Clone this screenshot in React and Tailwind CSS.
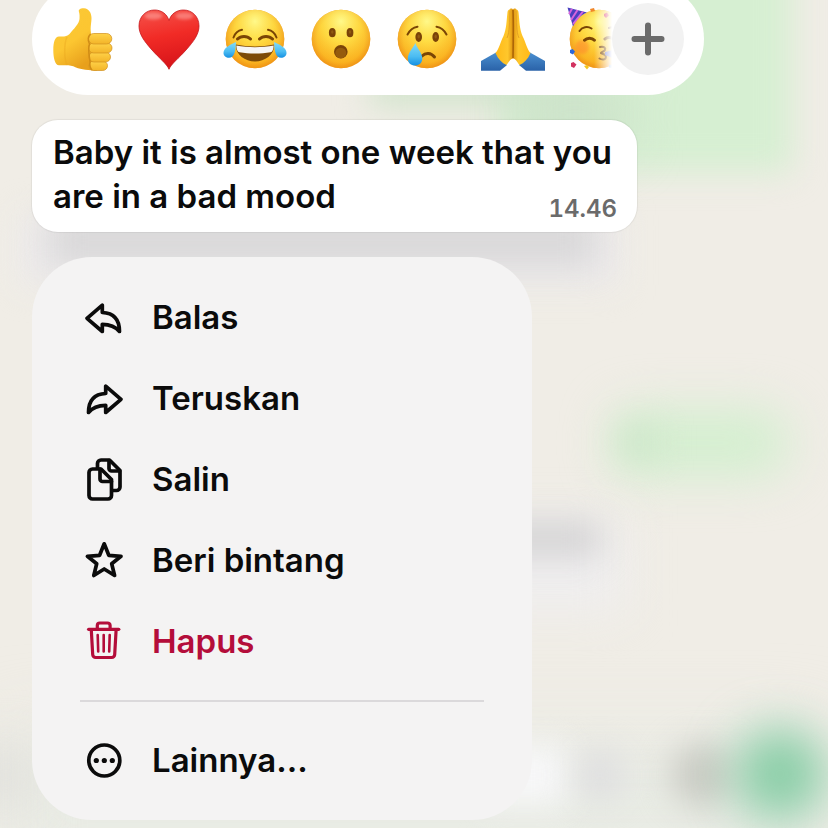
const Face = () => (
  <>
    <circle cx="32" cy="32" r="29.3" fill="url(#faceEdge)" />
    <circle cx="32" cy="32" r="29.3" fill="url(#faceGlow)" />
  </>
);

const ThumbsUp = () => (
  <>
    <path
      d="M28 5C27 2 30 1 33 1.200C38 1.500 40.500 6 40.500 11C40.500 16 39 20 40 26L46 63.500C38 63.500 30 62.500 25 60.500C19 57.500 16 58.500 8 58.300C4 58 2.300 51 2.300 43C2.300 35 4 29.500 8 29.500C12 29.500 16 30 18.500 27C23 21.500 28 17 28.500 12C28.700 9 28.600 7 28 5Z"
      fill="url(#hand)"
    />
    <path d="M16 30C13 36 13 52 16 58" stroke="#e9a51d" strokeWidth="1.500" fill="none" opacity="0.4" />
    <g fill="url(#finger)" stroke="#d08f1c" strokeWidth="0.700">
      <rect x="38" y="54" width="18.500" height="9.500" rx="4.700" />
      <rect x="38" y="45" width="21.500" height="10" rx="5" />
      <rect x="37.500" y="36" width="23.500" height="10" rx="5" />
      <rect x="37.500" y="26.500" width="23.300" height="10.500" rx="5.200" />
    </g>
    <path d="M39.500 27C36.500 30 37 34 38.500 37C36.500 42 38.500 49 39 55C38.500 58 39 61 41 63" stroke="#d08c16" strokeWidth="1.500" fill="none" />
  </>
);

const Heart = () => (
  <>
    <path
      d="M32 62.300C30 57 22 51 15 43C7 34 2 27 2 19C2 9.500 9 3 17.500 3C24.500 3 30 7 32 13.500C34 7 39.500 3 46.500 3C55 3 62 9.500 62 19C62 27 57 34 49 43C42 51 34 57 32 62.300Z"
      fill="url(#heart)"
      stroke="#c4151a"
      strokeWidth="0.800"
    />
    <ellipse cx="16.500" cy="9" rx="9" ry="3.500" fill="#ffb3ae" opacity="0.5" filter="url(#soft)" />
    <ellipse cx="47.500" cy="9" rx="9" ry="3.500" fill="#ffb3ae" opacity="0.5" filter="url(#soft)" />
  </>
);

const Joy = () => (
  <>
    <Face />
    <g stroke="#7a4505" fill="none" strokeLinecap="round">
      <path d="M10.500 30.500C12 26.500 15 23.500 19 22.800M53.500 30.500C52 26.500 49 23.500 45 22.800" strokeWidth="2" />
      <path d="M14.500 32C18 28.500 24 28.500 27.500 32M36.500 32C40 28.500 46 28.500 49.500 32" strokeWidth="3" />
    </g>
    <path d="M12.700 37.500C25 40 39 40 51.300 37.500C51.500 48 42 54.500 32 54.500C22 54.500 12.500 48 12.700 37.500Z" fill="#7c4a08" />
    <path d="M13.300 38.500C25 40.800 39 40.800 50.700 38.500C50.500 42.500 49.500 45 47.500 45.300C38 47 26 47 16.500 45.300C14.500 45 13.500 42.500 13.300 38.500Z" fill="#f6f5f4" />
    <path d="M13 35C4 39 0.500 42 0.500 46C0.500 49 3 50.800 6 50.800C11 50.800 12.500 45 13 35Z" fill="url(#tear)" />
    <path d="M51 35C60 39 63.500 42 63.500 46C63.500 49 61 50.800 58 50.800C53 50.800 51.500 45 51 35Z" fill="url(#tear)" />
  </>
);

const Wow = () => (
  <>
    <Face />
    <g fill="#7a4308">
      <ellipse cx="23.300" cy="25.700" rx="3.400" ry="4.600" />
      <ellipse cx="41" cy="25.700" rx="3.400" ry="4.600" />
      <ellipse cx="31.800" cy="44.700" rx="6.800" ry="6.800" />
    </g>
    <ellipse cx="31.800" cy="46" rx="5.500" ry="5.200" fill="#955b0d" />
    <ellipse cx="23.300" cy="25" rx="1.200" ry="1.800" fill="#905a12" />
    <ellipse cx="41" cy="25" rx="1.200" ry="1.800" fill="#905a12" />
  </>
);

const Sad = () => (
  <>
    <Face />
    <g stroke="#7a4505" fill="none" strokeLinecap="round" strokeWidth="2">
      <path d="M12.500 27.500C14.500 23.500 18 20.500 22.500 19.700M41.500 19.700C46 20.500 49.500 23.500 51.500 27.500" />
      <path d="M27 49C30.500 45.500 36 45.500 39.500 50" strokeWidth="3" />
    </g>
    <g fill="#7a4308">
      <ellipse cx="23.700" cy="30" rx="3.300" ry="5" />
      <ellipse cx="40.700" cy="30" rx="3.300" ry="5" />
    </g>
    <ellipse cx="23.700" cy="29.500" rx="1.200" ry="2" fill="#905a12" />
    <ellipse cx="40.700" cy="29.500" rx="1.200" ry="2" fill="#905a12" />
    <path d="M20.300 36C18 41 12.800 46 12.800 51.500C12.800 56 16 58.500 20 58.500C24 58.500 27.300 56 27.300 51.500C27.300 46 22 41 20.300 36Z" fill="url(#tear)" />
  </>
);

const Pray = () => (
  <>
    <path d="M0 54L15 45.500L26 58L19 63.700H0Z" fill="url(#sleeve)" />
    <path d="M64 54L49 45.500L38 58L45 63.700H64Z" fill="url(#sleeve)" />
    <path
      d="M32 2.500C31.500 1 29 1 28.500 2.500C27 3 26.500 4 26.400 6C25.500 14 25.500 22 22.500 29C19 36 18 42 14.500 46C17 52 21 56 25.500 58C28 55 29 52 32 51.500C35 52 36 55 38.500 58C43 56 47 52 49.500 46C46 42 45 36 41.500 29C38.500 22 38.500 14 37.600 6C37.500 4 37 3 35.500 2.500C35 1 32.500 1 32 2.500Z"
      fill="url(#palms)"
    />
    <path d="M32 3C32.500 15 32.300 35 32 51" stroke="#ac6608" strokeWidth="1.600" fill="none" />
    <path d="M29 4C28.300 15 29 24 26 31M35 4C35.700 15 35 24 38 31" stroke="#e5a223" strokeWidth="1" fill="none" />
  </>
);

const Party = () => (
  <>
    <Face />
    <circle cx="15" cy="40" r="7" fill="#ff7a2f" opacity="0.45" filter="url(#soft)" />
    <path d="M0.500 0.500L20 5.500C14 8 8.500 13 6 19.500Z" fill="#4a3fc0" />
    <path d="M5 1.700L2 7M10.500 3L4 13M16 4.500L6 17" stroke="#d565dc" strokeWidth="2" />
    <g stroke="#7a4505" fill="none" strokeLinecap="round">
      <path d="M12.500 24C15 20 20.500 19 24.500 21.500M42 21C44 20 46 20 48 21" strokeWidth="2" />
      <path d="M17.500 33.200C20 30.500 25 30.500 27.500 33.200M38 32C40 30 44 30 46 32" strokeWidth="3" />
      <path d="M33 40C37 39 39 41 38 43C37 45 34 45 34 46C35 47 39 47 39 50C39 53 35 53 32.500 51.500" strokeWidth="2" />
    </g>
    <path d="M38 45L46 43V51L38 48Z" fill="#6470d0" />
    <path d="M23 2L27 1L28 4L24 5Z" fill="#f0872a" />
    <path d="M37 7L40 5.500L42 8.500L39 11L37 9Z" fill="#dc3b65" />
    <path d="M3 43L5.500 42L8 44.500L6 47.500L3 46Z" fill="#2d67d8" />
    <path d="M4 56L6.500 55L9.500 57.500L7 61L4 59.500Z" fill="#d23260" />
    <path d="M17 59L20 58L22 60L20 62.500Z" fill="#f3c51f" />
    <path d="M42 58L46 57.500L45 61L42 60.500Z" fill="#5a93e0" />
  </>
);

const reactions = [
  { label: "Jempol", Drawing: ThumbsUp },
  { label: "Hati", Drawing: Heart },
  { label: "Tertawa", Drawing: Joy },
  { label: "Kaget", Drawing: Wow },
  { label: "Sedih", Drawing: Sad },
  { label: "Terima kasih", Drawing: Pray },
  { label: "Pesta", Drawing: Party },
];

const ReplyIcon = () => (
  <path d="M3 21.300L18.300 8.200V15.500C29.500 16 35.500 22.500 35.500 34.500C31.500 29.500 27 27.300 18.300 27.300V34.500Z" />
);

const ForwardIcon = () => (
  <path d="M37 21.300L21.700 8.200V15.500C10.500 16 4.500 22.500 4.500 34.500C8.500 29.500 13 27.300 21.700 27.300V34.500Z" />
);

const CopyIcon = () => (
  <>
    <path d="M8.500 10H17L27.500 20.500V36.500A3.500 3.500 0 0 1 24 40H8.500A3.500 3.500 0 0 1 5 36.500V13.500A3.500 3.500 0 0 1 8.500 10Z" />
    <path d="M16 10V20A2.500 2.500 0 0 0 18.500 22.500H27.500" />
    <path d="M13.500 9V4.500A3.500 3.500 0 0 1 17 1H25.500L36 11.500V28A3.500 3.500 0 0 1 32.500 31.500H28.500" />
    <path d="M25 1.500V9.500A2.500 2.500 0 0 0 27.500 12H35.500" />
  </>
);

const StarIcon = () => (
  <path d="M20.200 3.800L24.800 15.300L37 16.300L27.700 23.800L30.600 35.500L20.200 29L9.800 35.500L12.700 23.800L3.400 16.300L15.600 15.300Z" />
);

const TrashIcon = () => (
  <>
    <path d="M4.600 8.300H34.800" strokeWidth="3.200" />
    <path d="M13.300 8V4.500A2.500 2.500 0 0 1 15.800 2H23.600A2.500 2.500 0 0 1 26.100 4.500V8" strokeWidth="3.200" />
    <path d="M7.300 9L8.700 33.500A3 3 0 0 0 11.700 36.500H27.700A3 3 0 0 0 30.700 33.500L32.100 9" strokeWidth="3.200" />
    <path d="M13.700 14L14.200 30.500M19.700 14V30.500M25.700 14L25.200 30.500" strokeWidth="2.600" />
  </>
);

const MoreIcon = () => (
  <>
    <circle cx="20.300" cy="20.500" r="15.500" />
    <g fill="currentColor" stroke="none">
      <circle cx="12.300" cy="20.500" r="2.600" />
      <circle cx="20.300" cy="20.500" r="2.600" />
      <circle cx="28.300" cy="20.500" r="2.600" />
    </g>
  </>
);

const actions = [
  { label: "Balas", Icon: ReplyIcon },
  { label: "Teruskan", Icon: ForwardIcon },
  { label: "Salin", Icon: CopyIcon },
  { label: "Beri bintang", Icon: StarIcon },
  { label: "Hapus", Icon: TrashIcon, danger: true },
];

// Shared gradients for the emoji drawings
const EmojiDefs = () => (
  <svg className="absolute h-0 w-0" aria-hidden="true">
    <defs>
      <radialGradient id="faceEdge" cx="0.5" cy="0.5" r="0.5">
        <stop offset="0" stopColor="#ffd93b" />
        <stop offset="0.8" stopColor="#fcbe24" />
        <stop offset="1" stopColor="#ea8f17" />
      </radialGradient>
      <radialGradient id="faceGlow" cx="0.5" cy="0.2" r="0.75">
        <stop offset="0" stopColor="#fff98a" />
        <stop offset="0.45" stopColor="#ffe049" stopOpacity="0.7" />
        <stop offset="1" stopColor="#f79d16" stopOpacity="0.45" />
      </radialGradient>
      <linearGradient id="hand" x1="0" y1="0" x2="0.5" y2="1">
        <stop offset="0" stopColor="#fbc936" />
        <stop offset="0.6" stopColor="#fcc631" />
        <stop offset="1" stopColor="#e8a01c" />
      </linearGradient>
      <linearGradient id="finger" x1="0" y1="0" x2="0" y2="1">
        <stop offset="0" stopColor="#ffd349" />
        <stop offset="1" stopColor="#f3b429" />
      </linearGradient>
      <linearGradient id="palms">
        <stop offset="0" stopColor="#ffb917" />
        <stop offset="0.35" stopColor="#ffc72c" />
        <stop offset="0.5" stopColor="#dd9310" />
        <stop offset="0.65" stopColor="#ffc72c" />
        <stop offset="1" stopColor="#ffb917" />
      </linearGradient>
      <linearGradient id="heart" x1="0" y1="0" x2="0.2" y2="1">
        <stop offset="0" stopColor="#f5544c" />
        <stop offset="0.5" stopColor="#f12b26" />
        <stop offset="1" stopColor="#d9151a" />
      </linearGradient>
      <linearGradient id="tear" x1="0" y1="0" x2="0" y2="1">
        <stop offset="0" stopColor="#83dbf8" />
        <stop offset="0.6" stopColor="#4bbcf2" />
        <stop offset="1" stopColor="#1590e2" />
      </linearGradient>
      <linearGradient id="sleeve" x1="0" y1="0" x2="0" y2="1">
        <stop offset="0" stopColor="#4a8fd0" />
        <stop offset="1" stopColor="#2a62a8" />
      </linearGradient>
      <filter id="soft" x="-50%" y="-50%" width="200%" height="200%">
        <feGaussianBlur stdDeviation="1.800" />
      </filter>
    </defs>
  </svg>
);

// Blurred chat that stays behind the open message
const ChatBackdrop = () => (
  <div className="absolute inset-0 -z-10 overflow-hidden bg-[#f0ede6]" aria-hidden="true">
    <div className="absolute inset-x-0 -bottom-10 h-[130px] bg-[#e8ebe4] blur-2xl" />
    <div className="absolute -top-10 left-[500px] h-[212px] w-[292px] bg-[#d6efd2] blur-lg" />
    <div className="absolute top-[70px] left-[370px] h-[36px] w-[220px] bg-[#d0e4cb] blur-lg" />
    <div className="absolute top-[80px] left-[520px] h-[70px] w-[110px] bg-[#cde3ca] blur-xl" />
    <div className="absolute top-[215px] left-[20px] h-[70px] w-[600px] bg-[#eceaeb] blur-lg" />
    <div className="absolute top-[214px] left-[50px] h-[52px] w-[546px] bg-[#d9d8d9] blur-lg" />
    <div className="absolute top-[410px] left-[612px] h-[66px] w-[176px] rounded-3xl bg-[#d3efcf] blur-xl" />
    <div className="absolute top-[425px] left-[620px] h-[34px] w-[38px] bg-[#cde6ca] blur-lg" />
    <div className="absolute top-[520px] left-[480px] h-[90px] w-[145px] bg-[#efeeef] blur-xl" />
    <div className="absolute top-[522px] left-[480px] h-[34px] w-[120px] bg-[#d3d2d3] blur-lg" />
    <div className="absolute top-[745px] left-[480px] h-[60px] w-[90px] bg-[#f7f7f8] blur-lg" />
    <div className="absolute top-[749px] left-[574px] h-[52px] w-[52px] rounded-full bg-[#dfdfe0] blur-lg" />
    <div className="absolute top-[743px] left-[670px] h-[64px] w-[64px] rounded-full bg-[#cbccc5] blur-lg" />
    <div className="absolute top-[728px] left-[734px] h-[92px] w-[92px] rounded-full bg-[#88cda6] blur-xl" />
    <div className="absolute top-[745px] -left-4 h-[60px] w-[44px] bg-[#dededa] blur-xl" />
  </div>
);

const ReactionBar = () => (
  <div className="-mt-[17px] flex h-28 w-full max-w-[672px] items-center rounded-full bg-white pr-5 pl-[19px]">
    <div className="flex min-w-0 flex-1 gap-[22px] overflow-hidden [mask-image:linear-gradient(to_right,black_calc(100%_-_18px),transparent)]">
      {reactions.map(({ label, Drawing }) => (
        <button key={label} type="button" aria-label={label} className="h-16 w-16 shrink-0">
          <svg viewBox="0 0 64 64" className="h-16 w-16">
            <Drawing />
          </svg>
        </button>
      ))}
    </div>
    <button
      type="button"
      aria-label="Tambah reaksi"
      className="relative flex size-[72px] shrink-0 items-center justify-center rounded-full bg-[#f2f2f2] text-[#6b6b6b]"
    >
      <svg viewBox="0 0 34 34" className="h-[34px] w-[34px]" stroke="currentColor" strokeWidth="6" strokeLinecap="round">
        <path d="M17 3.500V30.500M3.500 17H30.500" />
      </svg>
    </button>
  </div>
);

const MessageBubble = () => (
  <article className="mt-[25px] w-full max-w-[605px] rounded-[26px] bg-white pt-2.5 pr-5 pb-3.5 pl-[21px] text-[33px] leading-[44px] font-semibold shadow-[0_0_1px_1px_rgba(0,0,0,0.06)]">
    <p>Baby it is almost one week that you</p>
    <div className="flex items-end justify-between">
      <p>are in a bad mood</p>
      <time className="text-2xl leading-[18px] font-semibold text-[#6b6b6b] tabular-nums">14.46</time>
    </div>
  </article>
);

const MenuItem = ({ label, Icon, danger }) => (
  <button
    type="button"
    role="menuitem"
    className={`flex h-[81px] w-full items-center gap-[26px] pl-0.5 text-left text-[33px] font-semibold ${
      danger ? "text-[#b40d3a]" : "text-[#0b0b0b]"
    }`}
  >
    <svg
      viewBox="-2 -1 44 44"
      className="h-11 w-11 shrink-0 overflow-visible"
      fill="none"
      stroke="currentColor"
      strokeWidth="3.700"
      strokeLinecap="round"
      strokeLinejoin="round"
    >
      <Icon />
    </svg>
    {label}
  </button>
);

const ContextMenu = () => (
  <div role="menu" className="mt-[25px] w-full max-w-[500px] rounded-[60px] bg-[#f4f3f3] px-12 pt-5 pb-[19px]">
    {actions.map((action) => (
      <MenuItem key={action.label} {...action} />
    ))}
    <hr className="my-[18px] border-t-2 border-[#dbd9db]" />
    <MenuItem label="Lainnya..." Icon={MoreIcon} />
  </div>
);

const App = () => {
  return (
    <main className="relative isolate flex min-h-screen flex-col overflow-hidden px-8 pb-1 font-['Inter','Liberation_Sans',sans-serif] text-[#0b0b0b]">
      <EmojiDefs />
      <ChatBackdrop />
      <ReactionBar />
      <MessageBubble />
      <ContextMenu />
    </main>
  );
};

export default App;
